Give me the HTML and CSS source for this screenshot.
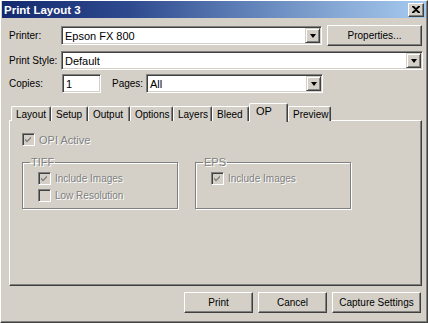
FILE: index.html
```html
<!DOCTYPE html>
<html lang="en">
  <head>
    <meta charset="UTF-8" />
    <title>Print Layout 3</title>
    <link rel="stylesheet" href="styles.css">
  </head>
  <body>
    <div class="window">
      <div class="titlebar">
        <span class="title">Print Layout 3</span>
        <span class="close">
          <svg width="8" height="7" viewBox="0 0 8 7"><path d="M0 0h2l2 2 2-2h2v1L5 3.5 8 6v1H6L4 5 2 7H0V6l3-2.5L0 1z" fill="#000"/></svg>
        </span>
      </div>

      <div class="content">
        <div class="row row-printer">
          <label class="lbl">Printer:</label>
          <div class="combo w-printer">
            <span class="val">Epson FX 800</span>
            <span class="drop"><i></i></span>
          </div>
          <button class="btn btn-props">Properties...</button>
        </div>

        <div class="row row-style">
          <label class="lbl">Print Style:</label>
          <div class="combo w-style">
            <span class="val">Default</span>
            <span class="drop"><i></i></span>
          </div>
        </div>

        <div class="row row-copies">
          <label class="lbl">Copies:</label>
          <div class="field w-copies"><span class="val">1</span></div>
          <label class="lbl lbl-pages">Pages:</label>
          <div class="combo w-pages">
            <span class="val">All</span>
            <span class="drop"><i></i></span>
          </div>
        </div>

        <div class="tabs">
          <span class="tab t-layout">Layout</span>
          <span class="tab t-setup">Setup</span>
          <span class="tab t-output">Output</span>
          <span class="tab t-options">Options</span>
          <span class="tab t-layers">Layers</span>
          <span class="tab t-bleed">Bleed</span>
          <span class="tab t-op active">OP</span>
          <span class="tab t-preview">Preview</span>
        </div>

        <div class="panel">
          <div class="check opi">
            <span class="box on"></span>
            <span class="txt">OPI Active</span>
          </div>

          <div class="groups">
            <fieldset class="group">
              <legend>TIFF</legend>
              <div class="check">
                <span class="box on"></span>
                <span class="txt">Include Images</span>
              </div>
              <div class="check">
                <span class="box"></span>
                <span class="txt">Low Resolution</span>
              </div>
            </fieldset>
            <fieldset class="group">
              <legend>EPS</legend>
              <div class="check">
                <span class="box on"></span>
                <span class="txt">Include Images</span>
              </div>
            </fieldset>
          </div>
        </div>

        <div class="actions">
          <button class="btn b-print">Print</button>
          <button class="btn b-cancel">Cancel</button>
          <button class="btn b-capture">Capture Settings</button>
        </div>
      </div>
    </div>
  </body>
</html>
```

FILE: styles.css
```css
* {
  margin: 0;
  padding: 0;
  box-sizing: border-box;
}

body {
  background-color: #d4d0c8;
  font-family: "Liberation Sans", Arial, sans-serif;
  font-size: 10px;
  color: #000;
  white-space: nowrap;
}

.window {
  width: 428px;
  height: 323px;
  background-color: #d4d0c8;
  border: 1px solid;
  border-color: #fff #404040 #404040 #fff;
  box-shadow: inset -1px -1px 0 #808080;
}

/* title bar */
.titlebar {
  height: 17px;
  margin: 0 1px;
  padding: 0 2px 0 2px;
  display: flex;
  align-items: center;
  justify-content: space-between;
  background: linear-gradient(90deg, #14296f 0%, #2e4a8e 30%, #5b7cb4 55%, #88aad6 80%, #a6caf0 100%);
}

.title {
  color: #fff;
  font-weight: bold;
  font-size: 11.5px;
}

.close {
  width: 16px;
  height: 14px;
  display: flex;
  align-items: center;
  justify-content: center;
  background-color: #d4d0c8;
  border: 1px solid;
  border-color: #fff #404040 #404040 #fff;
  box-shadow: inset -1px -1px 0 #808080;
}

.content {
  padding: 7px 6px 0 7px;
}

/* form rows */
.row {
  display: flex;
  align-items: center;
}

.row-printer {
  height: 21px;
}

.row-style {
  height: 19px;
  margin-top: 5px;
}

.row-copies {
  height: 19px;
  margin-top: 4px;
}

.lbl {
  flex-shrink: 0;
  width: 52px;
  padding-left: 1px;
}

.lbl-pages {
  width: 35px;
  margin-left: 10px;
}

.field,
.combo {
  flex-shrink: 0;
  height: 19px;
  display: flex;
  align-items: center;
  background-color: #fff;
  border: 1px solid;
  border-color: #808080 #fff #fff #808080;
  box-shadow: inset 1px 1px 0 #404040, inset -1px -1px 0 #d4d0c8;
}

.val {
  flex: 1;
  padding-left: 3px;
  padding-top: 1px;
  font-size: 11px;
}

.drop {
  width: 15px;
  height: 15px;
  margin-right: 1px;
  display: flex;
  align-items: center;
  justify-content: center;
  background-color: #d4d0c8;
  border: 1px solid;
  border-color: #d4d0c8 #404040 #404040 #d4d0c8;
  box-shadow: inset 1px 1px 0 #fff, inset -1px -1px 0 #808080;
}

.drop i {
  width: 0;
  height: 0;
  border-left: 3.5px solid transparent;
  border-right: 3.5px solid transparent;
  border-top: 4px solid #000;
}

.w-printer {
  width: 261px;
  margin-left: 1px;
}

.w-style {
  width: 362px;
  margin-left: 1px;
}

.w-copies {
  width: 39px;
  margin-left: 2px;
}

.w-pages {
  width: 177px;
}

/* buttons */
.btn {
  flex-shrink: 0;
  height: 21px;
  font-family: inherit;
  font-size: 10px;
  color: #000;
  background-color: #d4d0c8;
  border: 1px solid;
  border-color: #fff #404040 #404040 #fff;
  box-shadow: inset -1px -1px 0 #808080;
}

.btn-props {
  width: 95px;
  margin-left: 5px;
}

/* tabs */
.tabs {
  display: flex;
  align-items: flex-end;
  height: 18px;
  margin-top: 10px;
  padding-left: 3px;
  position: relative;
  z-index: 1;
}

.tab {
  height: 15px;
  padding: 2px 0 0 4px;
  border-top: 1px solid #fff;
  border-left: 1px solid #fff;
  border-right: 1px solid #404040;
  box-shadow: inset -1px 0 0 #808080;
  border-radius: 2px 2px 0 0;
  background-color: #d4d0c8;
}

.tab.active {
  height: 19px;
  margin-bottom: -1px;
  padding: 1px 0 0 6px;
  font-size: 11px;
}

.t-layout { width: 40px; }
.t-setup { width: 37px; }
.t-output { width: 42px; }
.t-options { width: 43px; }
.t-layers { width: 39px; }
.t-bleed { width: 37px; }
.t-op { width: 39px; }
.t-preview { width: 43px; }

/* tab panel */
.panel {
  width: 413px;
  height: 166px;
  margin-left: 1px;
  margin-top: -1px;
  padding: 10px 0 0 12px;
  border: 1px solid;
  border-color: #fff #404040 #404040 #fff;
  box-shadow: inset -1px -1px 0 #808080;
}

.check {
  display: flex;
  align-items: center;
  height: 17px;
  color: #808080;
  text-shadow: 1px 1px 0 #fff;
}

.opi .txt {
  font-size: 11px;
}

.box {
  width: 13px;
  height: 13px;
  margin-right: 4px;
  background-color: #d4d0c8;
  border: 1px solid;
  border-color: #808080 #fff #fff #808080;
  box-shadow: inset 1px 1px 0 #404040, inset -1px -1px 0 #d4d0c8;
}

.box.on {
  background: #d4d0c8 url("data:image/svg+xml,%3Csvg xmlns='http://www.w3.org/2000/svg' width='11' height='11'%3E%3Cpath d='M2 4.5l2 2 4-4v2l-4 4-2-2z' fill='%23808080'/%3E%3C/svg%3E") no-repeat 0 0;
}

.groups {
  display: flex;
  gap: 17px;
  margin-top: 9px;
}

.group {
  width: 156px;
  height: 52px;
  padding: 2px 0 0 15px;
  border: 1px solid #808080;
  box-shadow: inset 1px 1px 0 #fff, 1px 1px 0 #fff;
}

.group legend {
  margin-left: -8px;
  padding: 0 1px;
  color: #808080;
  text-shadow: 1px 1px 0 #fff;
  line-height: 11px;
  font-size: 11px;
}

/* bottom buttons */
.actions {
  display: flex;
  justify-content: flex-end;
  gap: 5px;
  margin-top: 6px;
}

.b-print { width: 69px; }
.b-cancel { width: 69px; }
.b-capture { width: 89px; }
```
